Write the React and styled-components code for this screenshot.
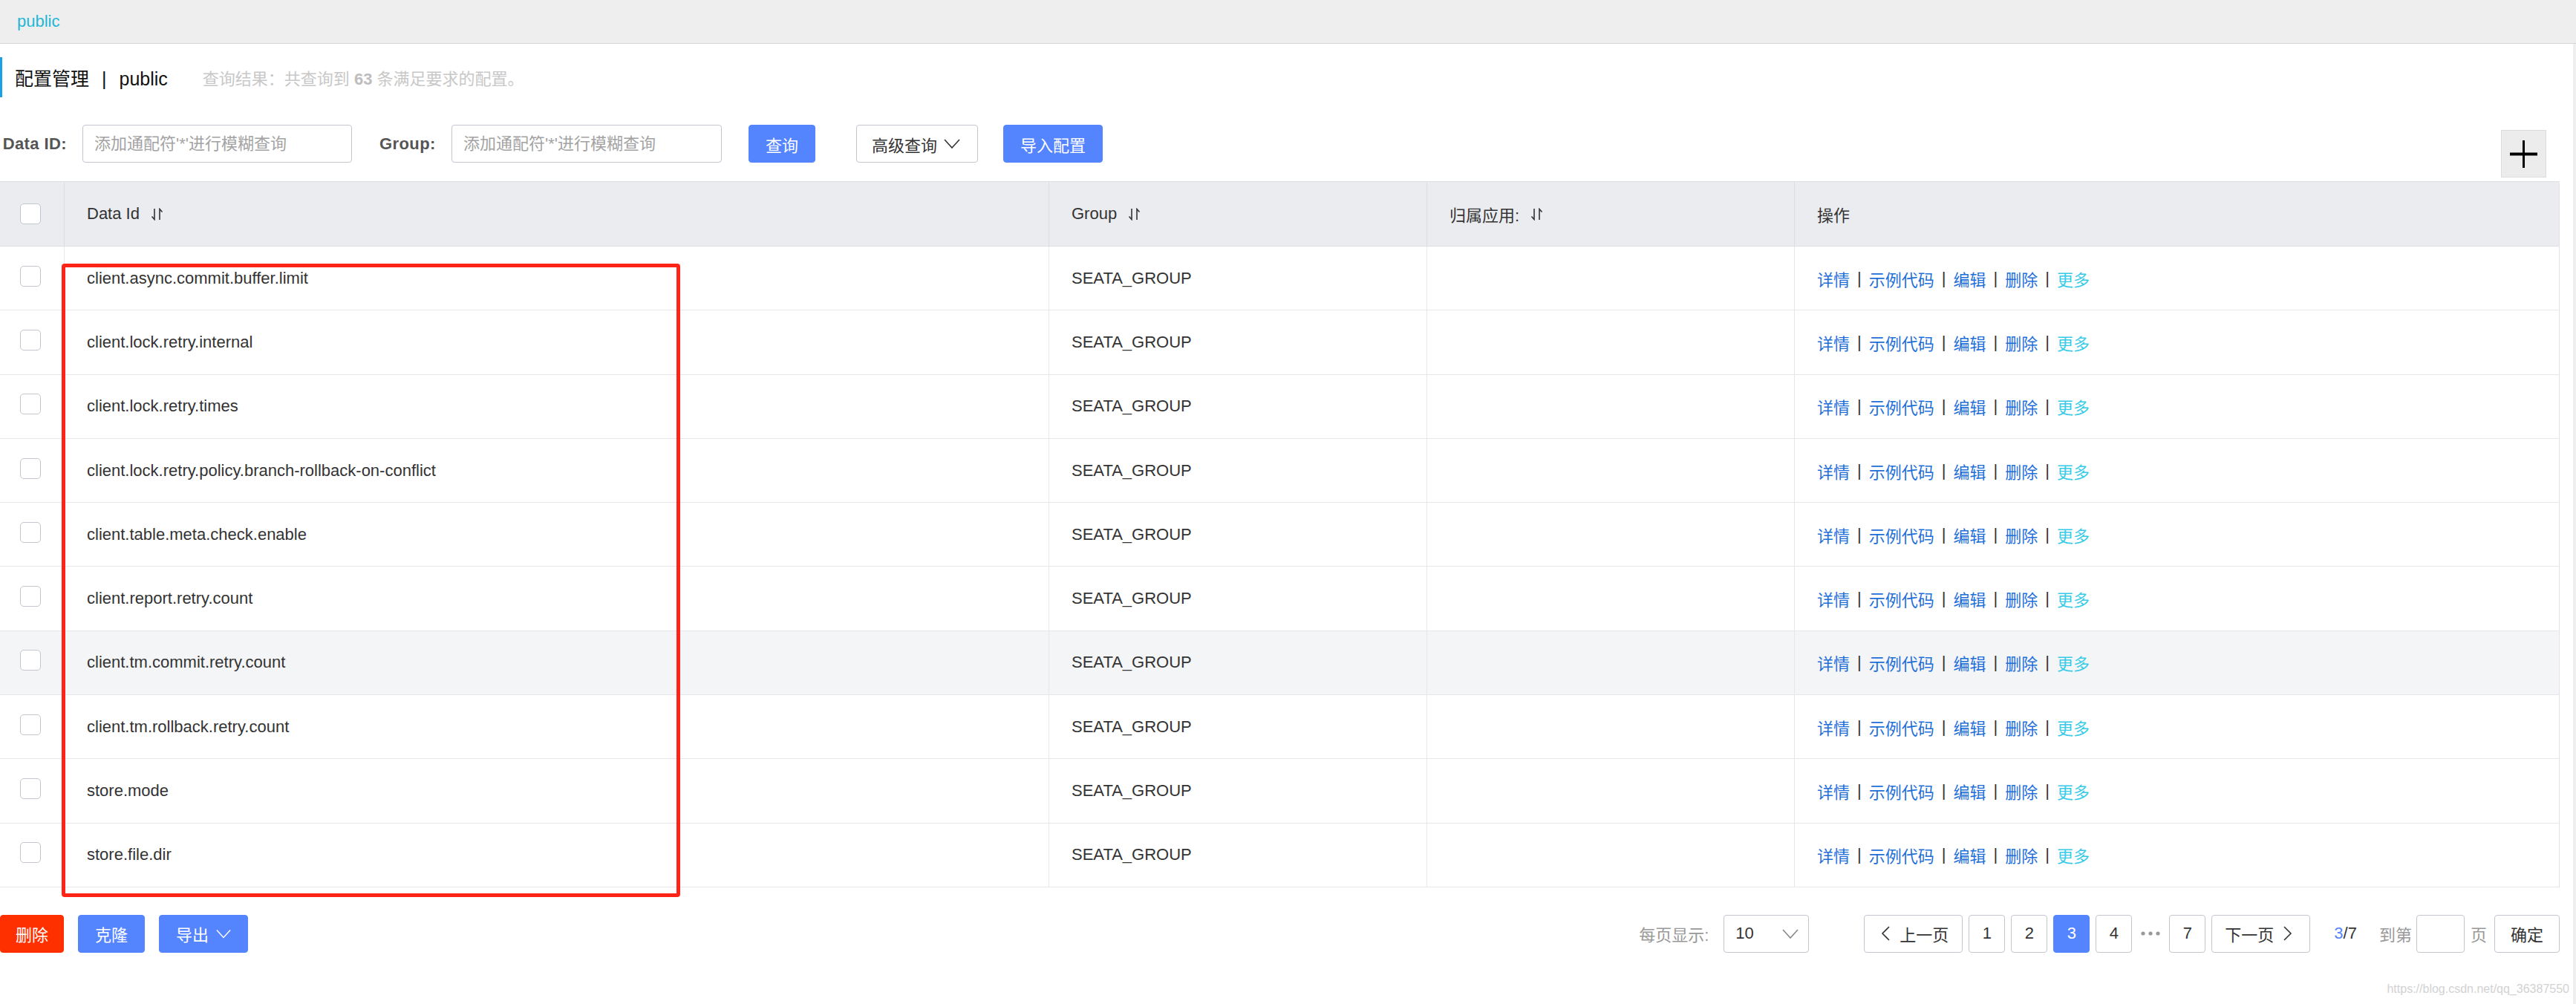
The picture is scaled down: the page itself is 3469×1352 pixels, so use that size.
import React from 'react';
import styled, { createGlobalStyle, css } from 'styled-components';

const FONT = `"Liberation Sans", "Noto Sans CJK SC", Arial, sans-serif`;

const GlobalStyle = createGlobalStyle`
  html, body {
    margin: 0;
    padding: 0;
    background: #fff;
  }
  body {
    font-family: ${FONT};
    color: #333;
  }
  * {
    box-sizing: border-box;
  }
`;

const Page = styled.div`
  position: relative;
  width: 3469px;
  min-height: 1352px;
  display: flex;
  flex-direction: column;
`;

const TopBar = styled.div`
  height: 59px;
  display: flex;
  align-items: center;
  padding-left: 23px;
  background: #eeeeee;
  border-bottom: 1px solid #d4d4d4;
  font-size: 22px;
  color: #1fb7d6;
`;

const Body = styled.div`
  flex: 1;
  display: flex;
`;

const Main = styled.div`
  flex: 1;
  min-width: 0;
  padding-right: 18px;
`;

const ScrollStrip = styled.div`
  width: 4px;
  background: #efefef;
`;

const TitleRow = styled.div`
  margin-top: 18px;
  height: 54px;
  display: flex;
  align-items: center;
  padding-left: 17px;
  border-left: 3px solid #1aa0e6;
`;

const Title = styled.div`
  font-size: 25px;
  color: #111;
  white-space: nowrap;
`;

const TitleSep = styled.span`
  margin: 0 17px;
`;

const Summary = styled.div`
  margin-left: 47px;
  font-size: 22px;
  color: #c8c8c8;
  white-space: nowrap;
  b {
    color: #bdbdbd;
  }
`;

const SearchRow = styled.div`
  margin-top: 37px;
  display: flex;
  align-items: flex-start;
`;

const Label = styled.label`
  flex-shrink: 0;
  width: ${(p) => p.$w}px;
  margin-right: ${(p) => p.$mr}px;
  line-height: 51px;
  text-align: right;
  white-space: nowrap;
  font-size: 22px;
  font-weight: bold;
  letter-spacing: 0.4px;
  color: #555;
`;

const Input = styled.input`
  flex-shrink: 0;
  width: ${(p) => p.$w}px;
  height: 51px;
  margin-right: ${(p) => p.$mr || 0}px;
  padding: 0 15px;
  border: 1px solid #c4c6cf;
  border-radius: 4px;
  font-family: ${FONT};
  font-size: 22px;
  color: #333;
  outline: none;
  &::placeholder {
    color: #a3a3a3;
  }
`;

const variants = {
  primary: css`
    background: #5584ff;
    border-color: #5584ff;
    color: #fff;
  `,
  normal: css`
    background: #fff;
    border-color: #c4c6cf;
    color: #333;
  `,
  danger: css`
    background: #ff3000;
    border-color: #ff3000;
    color: #fff;
  `,
};

const Button = styled.button`
  flex-shrink: 0;
  height: 51px;
  margin-left: ${(p) => p.$ml || 0}px;
  padding: ${(p) => p.$pad || '0 22px'};
  display: inline-flex;
  align-items: center;
  justify-content: center;
  gap: ${(p) => p.$gap || 0}px;
  border: 1px solid;
  border-radius: 4px;
  font-family: ${FONT};
  font-size: 22px;
  white-space: nowrap;
  cursor: pointer;
  ${(p) => variants[p.$variant || 'normal']}
`;

const PlusButton = styled.button`
  margin-left: auto;
  margin-right: 18px;
  margin-top: 7px;
  width: 61px;
  height: 64px;
  display: flex;
  align-items: center;
  justify-content: center;
  padding: 0;
  background: #ececec;
  border: 1px solid #dcdcdc;
  cursor: pointer;
`;

const TableWrap = styled.div`
  position: relative;
  margin-top: 5px;
  border-top: 1px solid #dcdee3;
  border-right: 1px solid #e3e4e8;
`;

const Row = styled.div`
  display: grid;
  grid-template-columns: 87px 1326px 509px 495px 1fr;
  ${(p) =>
    p.$head
      ? css`
          height: 87px;
          background: #ebecf0;
          border-bottom: 1px solid #dcdee3;
        `
      : css`
          height: 86.3px;
          background: ${p.$hover ? '#f4f5f7' : '#fff'};
          border-bottom: 1px solid #e6e7eb;
        `}
`;

const Cell = styled.div`
  display: flex;
  align-items: center;
  padding: 0 30px;
  border-right: 1px solid ${(p) => (p.$head ? '#dcdee3' : '#e6e7eb')};
  font-size: 22px;
  color: #333;
  white-space: nowrap;
  overflow: hidden;
  &:last-child {
    border-right: none;
  }
`;

const CheckCell = styled(Cell)`
  padding: 0 0 ${(p) => (p.$head ? 0 : 6)}px 27px;
`;

const Checkbox = styled.span`
  width: 28px;
  height: 28px;
  border: 1px solid #c4c6cf;
  border-radius: 5px;
  background: #fff;
`;

const SortMark = styled.svg`
  margin-left: 15px;
  flex-shrink: 0;
`;

const Link = styled.a`
  color: ${(p) => (p.$more ? '#37cbe8' : '#1f6fd8')};
  text-decoration: none;
  cursor: pointer;
`;

const LinkSep = styled.span`
  margin: 0 10px;
  color: #333;
`;

const Annotation = styled.div`
  position: absolute;
  left: 83px;
  top: 110px;
  width: 833px;
  height: 853px;
  border: 5px solid #ff2418;
  border-radius: 4px;
  pointer-events: none;
`;

const Footer = styled.div`
  margin-top: 37px;
  display: flex;
  align-items: center;
`;

const BatchActions = styled.div`
  display: flex;
  gap: 19px;
`;

const Pagination = styled.div`
  margin-left: auto;
  display: flex;
  align-items: center;
  font-size: 22px;
`;

const MutedText = styled.span`
  margin-left: ${(p) => p.$ml || 0}px;
  margin-right: ${(p) => p.$mr || 0}px;
  color: #999;
  white-space: nowrap;
`;

const SizeSelect = styled.div`
  width: 115px;
  height: 51px;
  padding: 0 13px 0 15px;
  display: flex;
  align-items: center;
  justify-content: space-between;
  border: 1px solid #c4c6cf;
  border-radius: 4px;
  color: #333;
`;

const Pager = styled.div`
  margin-left: 74px;
  display: flex;
  align-items: center;
  gap: 8px;
`;

const PageBtn = styled.button`
  min-width: 49px;
  height: 51px;
  padding: ${(p) => p.$pad || '0'};
  display: inline-flex;
  align-items: center;
  justify-content: center;
  gap: 13px;
  border: 1px solid ${(p) => (p.$active ? '#5584ff' : '#c4c6cf')};
  border-radius: 4px;
  background: ${(p) => (p.$active ? '#5584ff' : '#fff')};
  color: ${(p) => (p.$active ? '#fff' : '#333')};
  font-family: ${FONT};
  font-size: 22px;
  white-space: nowrap;
  cursor: pointer;
`;

const Ellipsis = styled.svg`
  margin: 0 4px;
`;

const PageInfo = styled.span`
  margin-left: 32px;
  color: #333;
  b {
    font-weight: normal;
    color: #5584ff;
  }
`;

const JumpInput = styled.input`
  width: 65px;
  height: 51px;
  margin-left: 6px;
  border: 1px solid #c4c6cf;
  border-radius: 4px;
  outline: none;
`;

const Watermark = styled.div`
  position: absolute;
  right: 9px;
  top: 1323px;
  font-size: 16px;
  color: #d2d2d2;
`;

const Chevron = ({ color = '#333', w = 22, h = 13 }) => (
  <svg width={w} height={h} viewBox="0 0 22 13" fill="none">
    <polyline points="1,1 11,12 21,1" stroke={color} strokeWidth="1.6" />
  </svg>
);

const ArrowLeft = () => (
  <svg width="12" height="20" viewBox="0 0 12 20" fill="none">
    <polyline points="11,1 2,10 11,19" stroke="#333" strokeWidth="1.6" />
  </svg>
);

const ArrowRight = () => (
  <svg width="12" height="20" viewBox="0 0 12 20" fill="none">
    <polyline points="1,1 10,10 1,19" stroke="#333" strokeWidth="1.6" />
  </svg>
);

const Sort = () => (
  <SortMark width="18" height="17" viewBox="0 0 18 17" fill="none">
    <path d="M5 1 V15.5 L1.5 11.5" stroke="#333" strokeWidth="1.6" />
    <path d="M12 16 V1.5 L15.5 5.5" stroke="#333" strokeWidth="1.6" />
  </SortMark>
);

const rows = [
  'client.async.commit.buffer.limit',
  'client.lock.retry.internal',
  'client.lock.retry.times',
  'client.lock.retry.policy.branch-rollback-on-conflict',
  'client.table.meta.check.enable',
  'client.report.retry.count',
  'client.tm.commit.retry.count',
  'client.tm.rollback.retry.count',
  'store.mode',
  'store.file.dir',
];

const actions = ['详情', '示例代码', '编辑', '删除'];

function App() {
  return (
    <Page>
      <GlobalStyle />
      <TopBar>public</TopBar>
      <Body>
        <Main>
          <TitleRow>
            <Title>
              配置管理<TitleSep>|</TitleSep>public
            </Title>
            <Summary>
              查询结果：共查询到 <b>63</b> 条满足要求的配置。
            </Summary>
          </TitleRow>

          <SearchRow>
            <Label $w={90} $mr={21}>Data ID:</Label>
            <Input $w={363} $mr={37} placeholder="添加通配符'*'进行模糊查询" />
            <Label $w={74} $mr={23}>Group:</Label>
            <Input $w={364} placeholder="添加通配符'*'进行模糊查询" />
            <Button $variant="primary" $ml={36}>查询</Button>
            <Button $ml={55} $pad="0 23px 0 20px" $gap={9}>
              高级查询 <Chevron />
            </Button>
            <Button $variant="primary" $ml={34}>导入配置</Button>
            <PlusButton>
              <svg width="37" height="37" viewBox="0 0 37 37">
                <line x1="18.5" y1="0" x2="18.5" y2="37" stroke="#000" strokeWidth="3" />
                <line x1="0" y1="18.5" x2="37" y2="18.5" stroke="#000" strokeWidth="4" />
              </svg>
            </PlusButton>
          </SearchRow>

          <TableWrap>
            <Row $head>
              <CheckCell $head>
                <Checkbox />
              </CheckCell>
              <Cell $head>
                Data Id <Sort />
              </Cell>
              <Cell $head>
                Group <Sort />
              </Cell>
              <Cell $head>
                归属应用: <Sort />
              </Cell>
              <Cell $head>操作</Cell>
            </Row>
            {rows.map((id, i) => (
              <Row key={id} $hover={i === 6}>
                <CheckCell>
                  <Checkbox />
                </CheckCell>
                <Cell>{id}</Cell>
                <Cell>SEATA_GROUP</Cell>
                <Cell />
                <Cell>
                  {actions.map((a) => (
                    <React.Fragment key={a}>
                      <Link>{a}</Link>
                      <LinkSep>|</LinkSep>
                    </React.Fragment>
                  ))}
                  <Link $more>更多</Link>
                </Cell>
              </Row>
            ))}
            <Annotation />
          </TableWrap>

          <Footer>
            <BatchActions>
              <Button $variant="danger" $pad="0 20px">删除</Button>
              <Button $variant="primary">克隆</Button>
              <Button $variant="primary" $gap={10} $pad="0 22px 0 22px">
                导出 <Chevron color="#fff" w={20} h={13} />
              </Button>
            </BatchActions>
            <Pagination>
              <MutedText $mr={20}>每页显示:</MutedText>
              <SizeSelect>
                10 <Chevron color="#888" />
              </SizeSelect>
              <Pager>
                <PageBtn $pad="0 18px 0 22px">
                  <ArrowLeft />
                  上一页
                </PageBtn>
                <PageBtn>1</PageBtn>
                <PageBtn>2</PageBtn>
                <PageBtn $active>3</PageBtn>
                <PageBtn>4</PageBtn>
                <Ellipsis width="26" height="8" viewBox="0 0 26 8">
                  <circle cx="3" cy="4" r="2.6" fill="#999" />
                  <circle cx="13" cy="4" r="2.6" fill="#999" />
                  <circle cx="23" cy="4" r="2.6" fill="#999" />
                </Ellipsis>
                <PageBtn>7</PageBtn>
                <PageBtn $pad="0 23px 0 17px">
                  下一页
                  <ArrowRight />
                </PageBtn>
              </Pager>
              <PageInfo>
                <b>3</b>/7
              </PageInfo>
              <MutedText $ml={30}>到第</MutedText>
              <JumpInput />
              <MutedText $ml={8}>页</MutedText>
              <Button $ml={10} $pad="0 21px">确定</Button>
            </Pagination>
          </Footer>
        </Main>
        <ScrollStrip />
      </Body>
      <Watermark>https://blog.csdn.net/qq_36387550</Watermark>
    </Page>
  );
}

export default App;
